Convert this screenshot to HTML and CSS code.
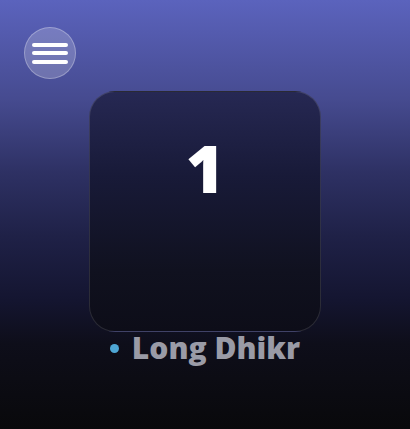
FILE: index.html
```html
<!DOCTYPE html>
<html>
<head>
<meta charset="utf-8">
<link rel="stylesheet" href="styles.css">
</head>
<body>
<div class="screen">
  <div class="topbar">
    <button class="menu" aria-label="Menu">
      <span class="line"></span>
      <span class="line"></span>
      <span class="line"></span>
    </button>
  </div>
  <div class="main">
    <div class="card">
      <div class="count">1</div>
    </div>
    <div class="label">
      <span class="dot"></span>
      <span class="name">Long Dhikr</span>
    </div>
  </div>
</div>
</body>
</html>
```
FILE: styles.css
```css
html, body {
  margin: 0;
  padding: 0;
}
body {
  width: 410px;
  height: 429px;
  overflow: hidden;
  font-family: "Open Sans", "Noto Sans", sans-serif;
}
.screen {
  height: 429px;
  background: linear-gradient(180deg, #5b63bd 0%, #464b90 23%, #2e3164 40%, #1f2147 55%, #141530 70%, #0e0e1a 80%, #09090b 100%);
  display: flex;
  flex-direction: column;
}
.topbar {
  padding: 27px 0 0 24px;
  height: 52px;
}
.menu {
  width: 52px;
  height: 52px;
  border-radius: 50%;
  box-sizing: border-box;
  border: 1px solid rgba(255,255,255,0.28);
  background: rgba(255,255,255,0.2);
  padding: 0;
  display: flex;
  flex-direction: column;
  align-items: center;
  justify-content: center;
  gap: 4.5px;
}
.line {
  display: block;
  width: 36px;
  height: 4px;
  border-radius: 2px;
  background: #ffffff;
}
.main {
  display: flex;
  flex-direction: column;
  align-items: center;
  padding-top: 12px;
}
.card {
  width: 232px;
  height: 241px;
  box-sizing: border-box;
  border-radius: 26px;
  border: 1.5px solid rgba(255,255,255,0.12);
  background: linear-gradient(180deg, #262853 0%, #181a38 35%, #10111f 75%, #0d0d18 100%);
  display: flex;
  justify-content: center;
}
.count {
  margin-top: 42px;
  font-size: 66px;
  font-weight: 800;
  line-height: 1;
  color: #ffffff;
}
.label {
  display: flex;
  align-items: center;
  gap: 13px;
}
.dot {
  width: 9px;
  height: 9px;
  border-radius: 50%;
  background: #4ea6d4;
}
.name {
  font-size: 30px;
  font-weight: 800;
  color: #9a9ba6;
  line-height: 32px;
}
```
